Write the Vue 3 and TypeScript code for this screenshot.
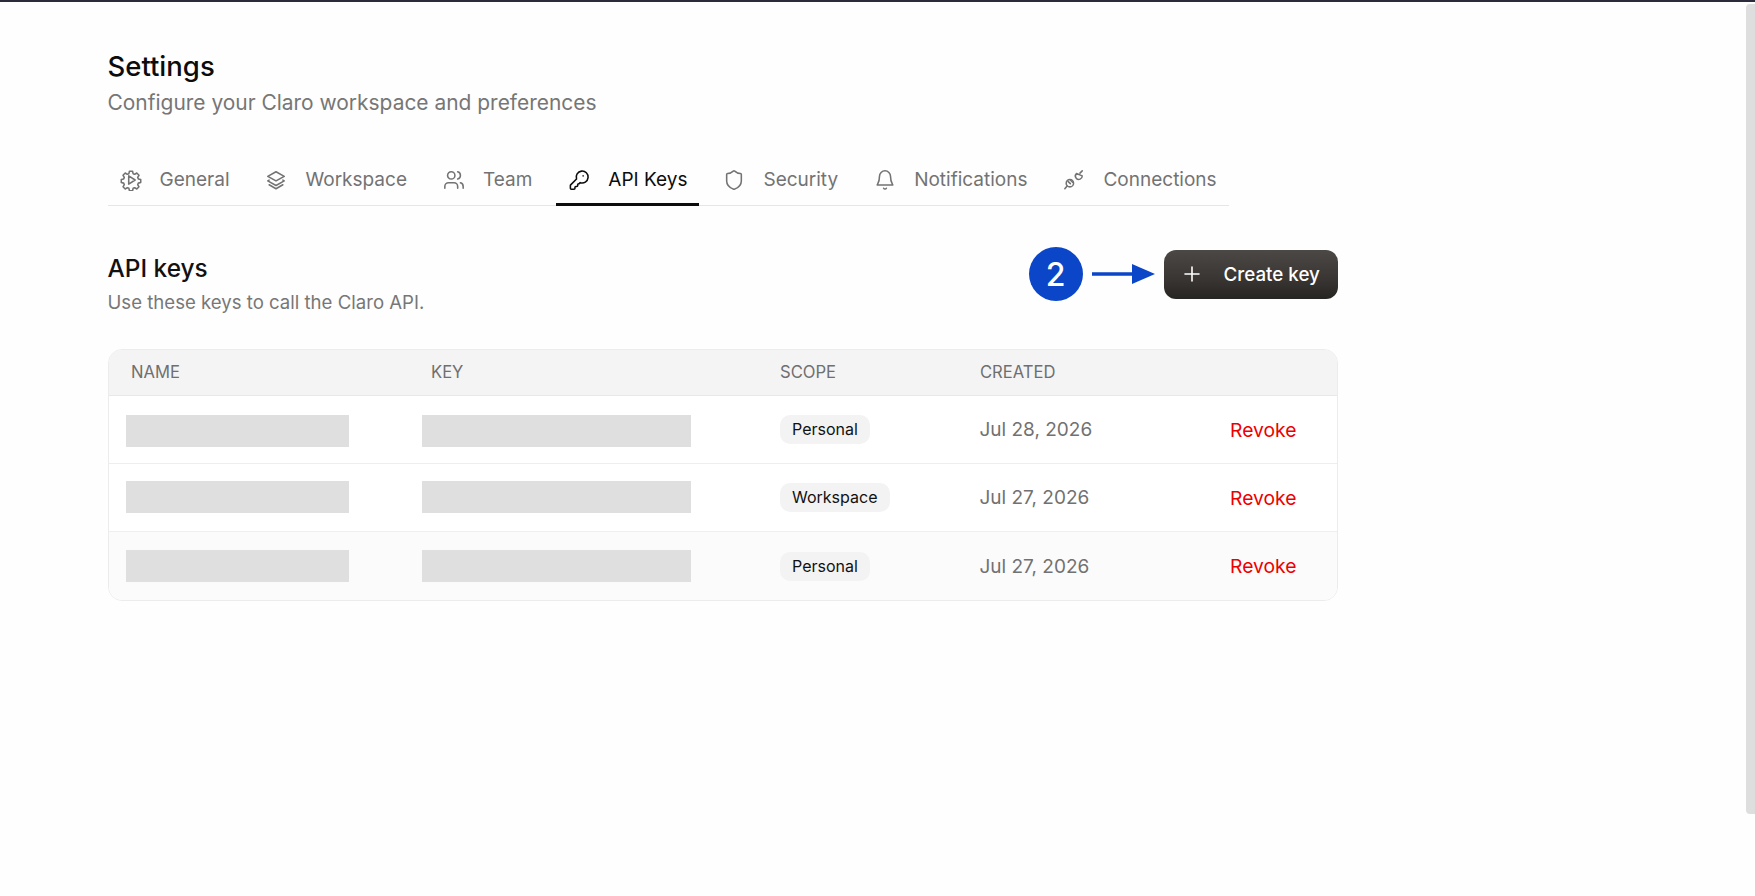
<template>
  <div class="page">
    <div class="topline"></div>
    <div class="scrollthumb"></div>
    <header class="page__head">
      <h1 class="page__title">Settings</h1>
      <p class="page__sub">Configure your Claro workspace and preferences</p>
    </header>

    <nav class="tabs">
      <a
        v-for="tab in tabs"
        :key="tab.label"
        class="tab"
        :class="{ 'tab--active': tab.label === 'API Keys' }"
      >
        <svg class="tab__icon" viewBox="0 0 24 24" fill="none" stroke="currentColor" stroke-width="1.7" stroke-linecap="round" stroke-linejoin="round">
          <path v-for="d in tab.icon" :key="d" :d="d" />
        </svg>
        <span>{{ tab.label }}</span>
      </a>
    </nav>

    <section class="keys">
      <div class="keys__head">
        <div>
          <h2 class="keys__title">API keys</h2>
          <p class="keys__sub">Use these keys to call the Claro API.</p>
        </div>
        <div class="keys__actions">
          <div class="step">
            <span class="step__num">2</span>
            <svg class="step__arrow" viewBox="0 0 64 22" fill="none">
              <path d="M0 11H42" stroke="#0b45c8" stroke-width="3.5" />
              <path d="M40 1L63 11L40 21Z" fill="#0b45c8" />
            </svg>
          </div>
          <button class="create" type="button">
            <svg class="create__plus" viewBox="0 0 18 18" fill="none" stroke="#fff" stroke-width="1.6" stroke-linecap="round">
              <path d="M9 2V16M2 9H16" />
            </svg>
            Create key
          </button>
        </div>
      </div>

      <div class="table">
        <div class="table__head">
          <span>Name</span>
          <span>Key</span>
          <span>Scope</span>
          <span>Created</span>
        </div>
        <div v-for="(row, i) in rows" :key="i" class="table__row" :class="{ 'table__row--last': i === rows.length - 1 }">
          <div class="blank blank--name"></div>
          <div class="blank blank--key"></div>
          <div class="scope"><span class="pill">{{ row.scope }}</span></div>
          <div class="date">{{ row.created }}</div>
          <a class="revoke">Revoke</a>
        </div>
      </div>
    </section>
  </div>
</template>

<script setup lang="ts">
interface Tab {
  label: string
  icon: string[]
}

interface Row {
  scope: string
  created: string
}

const tabs: Tab[] = [
  {
    label: 'General',
    icon: [
      'M10.300 2.500h3.400l.6 2.600 1.700.7 2.300-1.400 2.400 2.400-1.400 2.300.7 1.700 2.600.6v3.400l-2.600.6-.7 1.700 1.400 2.300-2.400 2.400-2.300-1.400-1.700.7-.6 2.600h-3.400l-.6-2.600-1.700-.7-2.300 1.400-2.400-2.400 1.400-2.300-.7-1.700-2.600-.6v-3.400l2.600-.6.7-1.700-1.400-2.300 2.400-2.400 2.300 1.400 1.700-.7z',
      'M9.500 7.500L16.500 12L9.500 16.500Z',
    ],
  },
  {
    label: 'Workspace',
    icon: [
      'M12 3L21 8L12 13L3 8Z',
      'M4.500 12.200L3 13L12 18L21 13L19.500 12.200',
      'M4.500 17.200L12 21.500L19.500 17.200',
    ],
  },
  {
    label: 'Team',
    icon: [
      'M16 21v-2a4 4 0 0 0-4-4H6a4 4 0 0 0-4 4v2',
      'M13 7a4 4 0 1 1-8 0a4 4 0 0 1 8 0Z',
      'M22 21v-2a4 4 0 0 0-3-3.870',
      'M16 3.130a4 4 0 0 1 0 7.750',
    ],
  },
  {
    label: 'API Keys',
    icon: [
      'M2.600 18.400v2.600a1 1 0 0 0 1 1h3a1 1 0 0 0 1-1v-1a1 1 0 0 1 1-1h1a1 1 0 0 0 1-1v-1a1 1 0 0 1 1-1h.2a1 1 0 0 0 .7-.3l.8-.8a6.500 6.500 0 1 0-4-4l-6.400 6.400a1 1 0 0 0-.3.7Z',
      'M16.500 7.500h.01',
    ],
  },
  {
    label: 'Security',
    icon: ['M20 13c0 5-3.500 7.500-7.700 9a1 1 0 0 1-.6 0C7.500 20.500 4 18 4 13V6a1 1 0 0 1 1-1c2 0 4.500-1.200 6.200-2.700a1.200 1.200 0 0 1 1.600 0C14.500 3.800 17 5 19 5a1 1 0 0 1 1 1Z'],
  },
  {
    label: 'Notifications',
    icon: [
      'M6 8a6 6 0 0 1 12 0c0 7 2.500 8.500 2.500 9.500H3.500C3.500 16.500 6 15 6 8Z',
      'M10.500 21a1.700 1.700 0 0 0 3 0',
    ],
  },
  {
    label: 'Connections',
    icon: [
      'M11.500 15.500a4 4 0 1 1-8 0a4 4 0 0 1 8 0Z',
      'M21 7.500a3.800 3.800 0 0 1-6.500 2.700a3.800 3.800 0 0 1 .2-5.200l6.300 2.500Z',
      'M4.500 18.500L2 21.500',
      'M18.500 4.500L21 2',
      'M8 12L10.500 14.500M5.500 13.500L8 16',
    ],
  },
]

const rows: Row[] = [
  { scope: 'Personal', created: 'Jul 28, 2026' },
  { scope: 'Workspace', created: 'Jul 27, 2026' },
  { scope: 'Personal', created: 'Jul 27, 2026' },
]
</script>

<style>
html,
body {
  margin: 0;
  background: #fff;
}
</style>

<style scoped>
.page {
  position: relative;
  box-sizing: border-box;
  height: 896px;
  overflow: hidden;
  padding: 49px 0 0 107.500px;
  font-family: Inter, 'Liberation Sans', sans-serif;
  color: #111;
  background: #fefefe;
}

.topline {
  position: absolute;
  top: 0;
  left: 0;
  right: 0;
  height: 2px;
  background: #2b2b3b;
}

.scrollthumb {
  position: absolute;
  top: 4px;
  right: 0;
  width: 9px;
  height: 810px;
  background: #dfdede;
  border-radius: 4px 0 0 4px;
}

.page__title {
  margin: 0;
  font-size: 27.500px;
  line-height: 34px;
  font-weight: 500;
  color: #0c0c0c;
}

.page__sub {
  margin: 5px 0 0;
  font-size: 20.950px;
  line-height: 30px;
  color: #767676;
}

.tabs {
  display: flex;
  gap: 12px;
  width: 1121px;
  height: 52px;
  box-sizing: border-box;
  margin-top: 36px;
  border-bottom: 1px solid #e6e6e6;
}

.tab {
  position: relative;
  flex: none;
  display: flex;
  align-items: center;
  gap: 18px;
  height: 51px;
  box-sizing: border-box;
  padding: 0 12px;
  font-size: 19px;
  white-space: nowrap;
  color: #737373;
}

.tab--active {
  color: #0c0c0c;
}

.tab--active::after {
  content: '';
  position: absolute;
  left: 0;
  right: 0;
  bottom: -1px;
  height: 3px;
  background: #0c0c0c;
}

.tab__icon {
  width: 22px;
  height: 22px;
  flex: none;
}

.keys {
  width: 1230px;
  margin-top: 43px;
}

.keys__head {
  display: flex;
  justify-content: space-between;
  align-items: flex-start;
}

.keys__title {
  margin: 3px 0 0;
  font-size: 24.400px;
  line-height: 32px;
  font-weight: 500;
  color: #111;
}

.keys__sub {
  margin: 5px 0 0;
  font-size: 18.600px;
  line-height: 26px;
  color: #777;
}

.keys__actions {
  display: flex;
  align-items: center;
  gap: 8px;
  margin-top: -2px;
}

.step {
  display: flex;
  align-items: center;
  gap: 9px;
}

.step__num {
  display: flex;
  align-items: center;
  justify-content: center;
  width: 54px;
  height: 54px;
  border-radius: 50%;
  background: #0b45c8;
  color: #fff;
  font-size: 32px;
  font-weight: 500;
}

.step__arrow {
  width: 64px;
  height: 22px;
}

.create {
  display: flex;
  align-items: center;
  gap: 23px;
  width: 174px;
  height: 49px;
  padding: 0 0 0 19px;
  box-sizing: border-box;
  border: 0;
  border-radius: 12px;
  background: linear-gradient(180deg, #4b4845 0%, #383532 60%, #272522 100%);
  color: #fff;
  font-family: inherit;
  font-size: 18.800px;
  font-weight: 500;
}

.create__plus {
  width: 18px;
  height: 18px;
}

.table {
  box-sizing: border-box;
  margin-top: 34px;
  border: 1px solid #ececec;
  border-radius: 14px;
  overflow: hidden;
  background: #fff;
}

.table__head {
  display: grid;
  grid-template-columns: 300px 349px 200px 1fr;
  align-items: center;
  box-sizing: border-box;
  height: 46px;
  padding: 0 0 2px 22.500px;
  background: #f4f4f4;
  border-bottom: 1px solid #e8e8e8;
  font-size: 16.600px;
  text-transform: uppercase;
  color: #6f6f6f;
}

.table__row {
  display: grid;
  grid-template-columns: 296px 358px 200px 1fr auto;
  align-items: center;
  box-sizing: border-box;
  height: 68px;
  padding: 0 40px 0 17px;
  border-bottom: 1px solid #eee;
}

.table__row--last {
  border-bottom: 0;
  background: #fbfbfb;
}

.blank {
  height: 32px;
  background: #e0dfdf;
}

.table__row:nth-child(2) .blank {
  margin-top: 2px;
}

.table__row:nth-child(3) .blank {
  margin-bottom: 2px;
}

.blank--name {
  width: 223px;
}

.blank--key {
  width: 269px;
}

.scope {
  display: flex;
}

.pill {
  padding: 0 12.500px;
  height: 29px;
  line-height: 29px;
  border-radius: 10px;
  background: #f3f3f3;
  font-size: 16px;
  color: #111;
}

.date {
  font-size: 19px;
  color: #717171;
}

.revoke {
  font-size: 19.300px;
  color: #ee0000;
}
</style>
